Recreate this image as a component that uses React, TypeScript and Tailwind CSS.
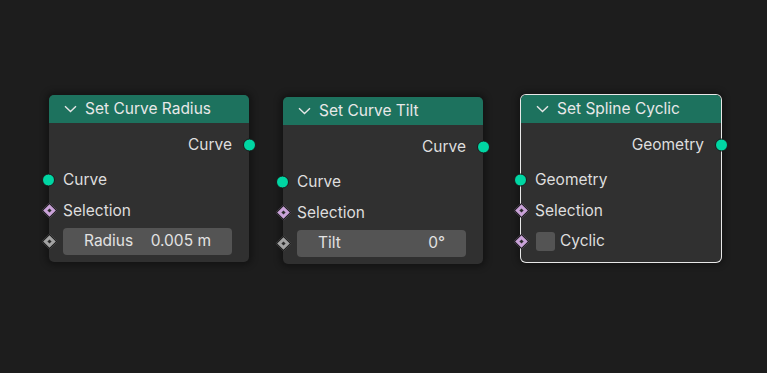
import React from "react";

const font = { fontFamily: "Inter, 'Noto Sans', sans-serif" };

function Circle({ side }: { side: "left" | "right" }) {
  return (
    <span
      className={`absolute top-1/2 -translate-y-1/2 w-[13px] h-[13px] rounded-full bg-[#00d6a3] border border-[#1a1a1a] ${
        side === "left" ? "left-[-7px]" : "right-[-7px]"
      }`}
    />
  );
}

function Diamond({ color }: { color: string }) {
  return (
    <span className="absolute top-1/2 left-[-8px] -translate-y-1/2 w-[16px] h-[16px] flex items-center justify-center">
      <span
        className="w-[11px] h-[11px] rotate-45 border border-[#1a1a1a] flex items-center justify-center shrink-0"
        style={{ background: color }}
      >
        <span className="w-[3px] h-[3px] bg-[#2a2a2a]" />
      </span>
    </span>
  );
}

function Chevron() {
  return (
    <svg width="13" height="8" viewBox="0 0 13 8" className="shrink-0">
      <path d="M1 1.2 L6.5 6.5 L12 1.2" fill="none" stroke="#e6e6e6" strokeWidth="1.4" />
    </svg>
  );
}

function Node({
  title,
  left,
  top,
  selected,
  children,
}: {
  title: string;
  left: number;
  top: number;
  selected?: boolean;
  children: React.ReactNode;
}) {
  return (
    <div
      className={`absolute w-[200px] rounded-[5px] bg-[#303030] shadow-[0_0_6px_3px_rgba(0,0,0,0.35)] ${
        selected ? "ring-1 ring-[#e8e8e8]" : ""
      }`}
      style={{ left, top }}
    >
      <div className="h-[28px] rounded-t-[5px] bg-[#1d725e] flex items-center pl-[15px] gap-[8px] text-[15.5px] text-[#e8e8e8]">
        <Chevron />
        <span className="leading-none">{title}</span>
      </div>
      <div className="pt-[7px] pb-[6px] text-[15.5px] text-[#dedede]">{children}</div>
    </div>
  );
}

function OutRow({ label }: { label: string }) {
  return (
    <div className="relative h-[30px] flex items-center justify-end pr-[17px] mb-[5px]">
      <span>{label}</span>
      <Circle side="right" />
    </div>
  );
}

function InRow({ label, kind, h = 30 }: { label: string; kind: "circle" | "diamond"; h?: number }) {
  return (
    <div className="relative flex items-center pl-[14px]" style={{ height: h }}>
      <span>{label}</span>
      {kind === "circle" ? <Circle side="left" /> : <Diamond color="#c9a2d8" />}
    </div>
  );
}

function FieldRow({ label, value }: { label: string; value: string }) {
  return (
    <div className="relative h-[30px] flex items-center pl-[14px]">
      <Diamond color="#a3a3a3" />
      <div className="w-[169px] h-[27px] rounded-[4px] bg-[#545454] flex items-center justify-between px-[21px] text-[#e2e2e2]">
        <span>{label}</span>
        <span>{value}</span>
      </div>
    </div>
  );
}

export default function App() {
  return (
    <div className="relative w-[767px] h-[373px] bg-[#1d1d1d] overflow-hidden" style={font}>
      <Node title="Set Curve Radius" left={49} top={95}>
        <OutRow label="Curve" />
        <InRow label="Curve" kind="circle" />
        <InRow label="Selection" kind="diamond" h={31} />
        <FieldRow label="Radius" value="0.005 m" />
      </Node>
      <Node title="Set Curve Tilt" left={283} top={97}>
        <OutRow label="Curve" />
        <InRow label="Curve" kind="circle" />
        <InRow label="Selection" kind="diamond" h={31} />
        <FieldRow label="Tilt" value="0°" />
      </Node>
      <Node title="Set Spline Cyclic" left={521} top={95} selected>
        <OutRow label="Geometry" />
        <InRow label="Geometry" kind="circle" />
        <InRow label="Selection" kind="diamond" h={31} />
        <div className="relative h-[30px] flex items-center pl-[15px] gap-[5px]">
          <Diamond color="#c9a2d8" />
          <span className="w-[19px] h-[19px] rounded-[3px] bg-[#545454]" />
          <span>Cyclic</span>
        </div>
      </Node>
    </div>
  );
}
